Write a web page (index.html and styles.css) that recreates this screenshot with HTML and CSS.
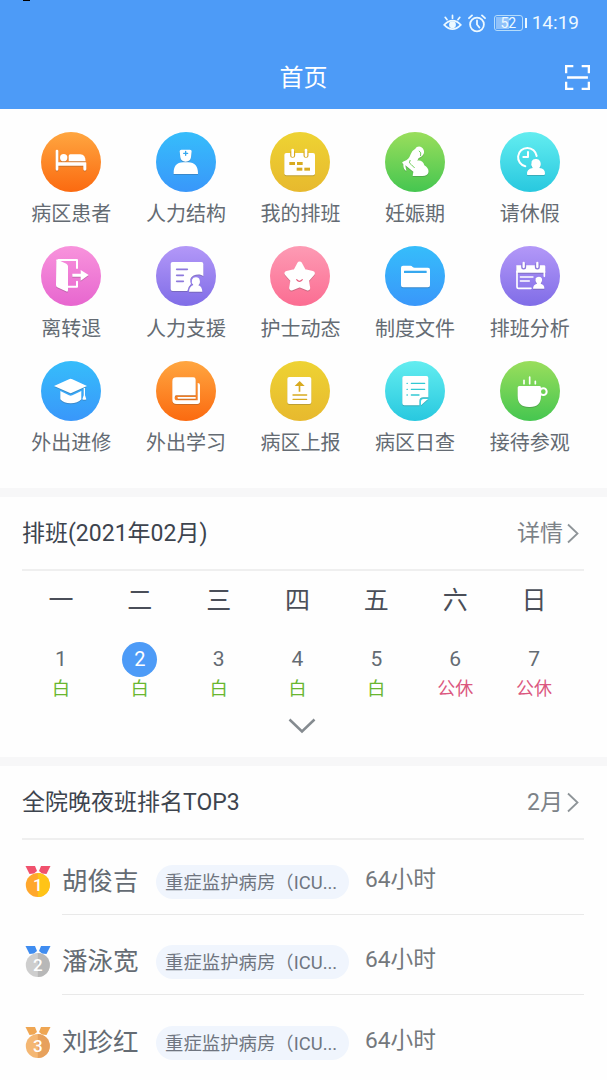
FILE: index.html
```html
<!DOCTYPE html>
<html lang="zh-CN">
<head>
<meta charset="utf-8">
<title>首页</title>
<link rel="stylesheet" href="styles.css">
</head>
<body>
<header class="header">
  <span class="notch"></span>
  <div class="status">
    <svg class="status-eye" viewBox="0 0 20 18" fill="none" stroke="currentColor" stroke-width="1.8" stroke-linecap="round"><path d="M1.3 11Q10 2.2 18.7 11Q10 20 1.3 11Z"/><circle cx="10" cy="10.8" r="2.7" fill="currentColor"/><path d="M10 4V1M4.3 5.5 2.3 3M15.7 5.5 17.7 3"/></svg>
    <svg class="status-clock" viewBox="0 0 18 19" fill="none" stroke="currentColor" stroke-width="1.8" stroke-linecap="round"><circle cx="9" cy="10.5" r="6.9"/><path d="M9 6.5V10.5L11.4 13.5M1 4.2 4 1.4M17 4.2 14 1.4"/></svg>
    <span class="battery"><span class="battery-level"></span><span class="battery-text">52</span></span>
    <span class="time">14:19</span>
  </div>
  <div class="titlebar">
    <h1 class="title">首页</h1>
    <svg class="scan" viewBox="0 0 24 24" fill="none" stroke="currentColor" stroke-width="2.2"><path d="M1.1 8V1.1H8M16 1.1H22.9V8M22.9 16V22.9H16M8 22.9H1.1V16M2 12H22"/></svg>
  </div>
</header>

<nav class="menu">
  <a class="item"><svg class="icon orange" viewBox="0 0 180 180"><g class="glyph"><path d="M44 57q0-4 4-4t4 4V91H134q2 0 2 3V112q0 4-4.500 4T127 112V101H52V112q0 4-4 4t-4-4Z"/><circle cx="68" cy="77" r="11"/><path d="M83 88V72q0-5 5-5H118q15 0 16 21Z"/></g></svg><span class="label">病区患者</span></a>
  <a class="item"><svg class="icon blue" viewBox="0 0 180 180"><g class="glyph"><path d="M71 58q0-5 5-5h26q5 0 5 5l-2 18q-2 13-16 13t-16-13ZM53 126q-2-34 29-35h14q31 1 30 35Z"/></g><path class="line" stroke-width="4" d="M89 58V70M83 64H95"/></svg><span class="label">人力结构</span></a>
  <a class="item"><svg class="icon yellow" viewBox="0 0 180 180"><g class="glyph"><rect x="43" y="63" width="92" height="67" rx="6"/></g><g class="cut"><rect x="58" y="90" width="17" height="9"/><rect x="81" y="90" width="17" height="9"/><rect x="80" y="107" width="17" height="9"/><rect x="103" y="107" width="17" height="9"/></g><path class="line" stroke-width="15" d="M68 62V70M108 62V70"/><path class="white-line" stroke-width="8" d="M68 54V71M108 54V71"/></svg><span class="label">我的排班</span></a>
  <a class="item"><svg class="icon green" viewBox="0 0 180 180"><g class="glyph"><path d="M91 50C96 40 112 41 116 54C120 64 113 72 107 75Q99 77 97 86C106 84 116 88 118 100C129 107 134 116 128 126C123 134 107 132 83 132L85 119L61 100L64 117Q54 111 55 96Q47 92 57 88Q72 83 77 67Q82 54 91 50Z"/></g><path class="line" stroke-width="3" d="M103 57Q110 61 107 71M75 85Q69 94 79 98L88 107"/></svg><span class="label">妊娠期</span></a>
  <a class="item"><svg class="icon cyan" viewBox="0 0 180 180"><g class="glyph"><path d="M81 128Q79 111 98 108Q91 98 95 88Q99 80 108 81Q118 80 121 89Q125 99 118 108Q136 110 135 125Q135 129 131 129H84Z"/></g><path class="white-line" stroke-width="6" d="M76 103A28 28 0 1 1 110 72M84 60V75H70"/></svg><span class="label">请休假</span></a>

  <a class="item"><svg class="icon pink" viewBox="0 0 180 180"><g class="glyph"><path d="M46 44Q44 39 50 41L76 53Q81 56 81 61V133Q81 139 75 136L49 124Q45 122 45 117Z"/><path d="M119 72 143 87 119 104V92H94V83H119Z"/></g><path class="white-line" stroke-width="6" d="M52 42H108V66M80 122H108V107"/></svg><span class="label">离转退</span></a>
  <a class="item"><svg class="icon violet" viewBox="0 0 180 180"><g class="glyph"><path d="M50 48H136Q142 48 142 54V91C134 82 109 84 103 99Q102 108 105 114Q98 120 94 135H50Q44 135 44 129V54Q44 48 50 48Z"/><path d="M99 137Q100 122 112 117Q105 110 108 101Q111 94 119 94Q129 93 131 102Q134 112 127 118Q138 121 139 137Z"/></g><path class="line" stroke-width="5" d="M62 70H94M62 88H82M62 106H82"/></svg><span class="label">人力支援</span></a>
  <a class="item"><svg class="icon rose" viewBox="0 0 180 180"><g class="glyph"><path class="star" d="M89 54 101 76 127 82 109 102 113 126 89 116 65 126 69 102 51 82 77 76Z"/></g><path class="line" stroke-width="3.500" d="M80 101Q88 111 97 101"/></svg><span class="label">护士动态</span></a>
  <a class="item"><svg class="icon blue" viewBox="0 0 180 180"><g class="glyph"><path d="M48 65Q48 59 54 59H76Q80 59 83 63Q85 65 89 65H129Q135 65 135 71V118Q135 124 129 124H54Q48 124 48 118Z"/></g><rect class="cut" x="57" y="74" width="68" height="7" rx="1"/></svg><span class="label">制度文件</span></a>
  <a class="item"><svg class="icon violet" viewBox="0 0 180 180"><path class="glyph" d="M49 58H132Q136 58 136 62V80H49Z"/><path class="white-line" stroke-width="5" d="M51 76V122Q51 127 56 127H93M133 76V91"/><path class="white-line" stroke-width="4" d="M61 93H99M61 105H88"/><path class="glyph" d="M99 128Q99 116 111 113Q104 105 107 97Q110 92 117 92Q124 92 126 98Q128 106 122 113Q134 116 133 128Z"/><path class="line" stroke-width="15" d="M71 57V63M112 57V63"/><path class="white-line" stroke-width="7" d="M71 51V63M112 51V63"/></svg><span class="label">排班分析</span></a>

  <a class="item"><svg class="icon blue" viewBox="0 0 180 180"><g class="glyph"><path d="M39 75 84 55Q89 52 94 55L138 75 91 96Q89 97 87 96Z"/><path d="M58 90 84 103Q89 105 94 103L121 90V115Q110 127 89 127T58 115Z"/><path d="M128 81H132V103L136 115Q130 118 124 115L128 103Z"/></g></svg><span class="label">外出进修</span></a>
  <a class="item"><svg class="icon orange" viewBox="0 0 180 180"><g class="glyph"><path d="M49 61Q49 49 61 49H112Q119 49 119 56V103H61Q56 103 56 110Q56 118 63 118H125V66Q132 66 132 72V121Q132 129 124 129H62Q49 129 49 117Z"/><path d="M66 108H119V113H66Q62 110 66 108Z"/></g></svg><span class="label">外出学习</span></a>
  <a class="item"><svg class="icon yellow" viewBox="0 0 180 180"><rect class="glyph" x="52" y="48" width="72" height="81" rx="6"/><path class="cut" d="M89 60 104 75H91V92H86V75H74Z"/><path class="line" stroke-width="4" d="M69 102H110M69 115H110"/></svg><span class="label">病区上报</span></a>
  <a class="item"><svg class="icon cyan" viewBox="0 0 180 180"><path class="glyph" d="M58 45H124Q130 45 130 51V109H115Q103 109 103 121V133H58Q52 133 52 127V51Q52 45 58 45ZM108 133V122Q108 114 116 114H129Z"/><path class="line" stroke-width="4" d="M66 67H67M79 67H119M66 85H67M79 85H119M66 102H67M79 102H102"/></svg><span class="label">病区日查</span></a>
  <a class="item"><svg class="icon green" viewBox="0 0 180 180"><path class="glyph" d="M53 80Q53 75 58 75H119Q123 75 123 80V105Q123 138 90 138H87Q53 138 53 105Z"/><circle class="white-line" cx="130" cy="92" r="10" stroke-width="6"/><path class="white-line" stroke-width="5" d="M72 58V68M89 48V68M106 61V68"/></svg><span class="label">接待参观</span></a>
</nav>

<section class="panel schedule">
  <div class="panel-head"><h2 class="panel-title">排班(2021年02月)</h2><a class="more">详情<svg class="arrow" viewBox="0 0 12 20"><path d="M1 1 10.500 10 1 19"/></svg></a></div>
  <div class="week">
    <span>一</span><span>二</span><span>三</span><span>四</span><span>五</span><span>六</span><span>日</span>
  </div>
  <div class="days">
    <div class="day"><b class="num">1</b><span class="work">白</span></div>
    <div class="day"><b class="num today">2</b><span class="work">白</span></div>
    <div class="day"><b class="num">3</b><span class="work">白</span></div>
    <div class="day"><b class="num">4</b><span class="work">白</span></div>
    <div class="day"><b class="num">5</b><span class="work">白</span></div>
    <div class="day"><b class="num">6</b><span class="rest">公休</span></div>
    <div class="day"><b class="num">7</b><span class="rest">公休</span></div>
  </div>
  <svg class="expand" viewBox="0 0 28 16"><path d="M1.500 1.500 14 13.500 26.500 1.500"/></svg>
</section>

<section class="panel ranking">
  <div class="panel-head"><h2 class="panel-title">全院晚夜班排名TOP3</h2><a class="more">2月<svg class="arrow" viewBox="0 0 12 20"><path d="M1 1 10.500 10 1 19"/></svg></a></div>
  <ol class="ranks">
    <li class="rank"><svg class="medal gold" viewBox="0 0 26 33"><path class="ribbon" d="M.5 1H10L12 6 9 8.500 4.500 9ZM25.500 1H16L14 6 17 8.500 21.500 9Z"/><circle class="coin" cx="12.800" cy="20" r="12"/><path class="shade" d="M12.800 8A12 12 0 0 1 12.800 32Z"/><text x="12.800" y="26">1</text></svg><div class="row"><span class="name">胡俊吉</span><span class="dept">重症监护病房（ICU...</span><span class="hours">64小时</span></div></li>
    <li class="rank"><svg class="medal silver" viewBox="0 0 26 33"><path class="ribbon" d="M.5 1H10L12 6 9 8.500 4.500 9ZM25.500 1H16L14 6 17 8.500 21.500 9Z"/><circle class="coin" cx="12.800" cy="20" r="12"/><path class="shade" d="M12.800 8A12 12 0 0 1 12.800 32Z"/><text x="12.800" y="26">2</text></svg><div class="row"><span class="name">潘泳宽</span><span class="dept">重症监护病房（ICU...</span><span class="hours">64小时</span></div></li>
    <li class="rank"><svg class="medal bronze" viewBox="0 0 26 33"><path class="ribbon" d="M.5 1H10L12 6 9 8.500 4.500 9ZM25.500 1H16L14 6 17 8.500 21.500 9Z"/><circle class="coin" cx="12.800" cy="20" r="12"/><path class="shade" d="M12.800 8A12 12 0 0 1 12.800 32Z"/><text x="12.800" y="26">3</text></svg><div class="row"><span class="name">刘珍红</span><span class="dept">重症监护病房（ICU...</span><span class="hours">64小时</span></div></li>
  </ol>
</section>
</body>
</html>
```
FILE: styles.css
```css
* { box-sizing: border-box; }
body {
  margin: 0;
  width: 607px;
  height: 1080px;
  overflow: hidden;
  background: #fefefe;
  color: #646b73;
  font-family: Roboto, "Noto Sans CJK SC", sans-serif;
  font-weight: 400;
}
h1, h2, ol { margin: 0; padding: 0; font-weight: 400; }
ol { list-style: none; }
svg { display: block; flex: none; }

.header { position: relative; height: 109px; background: #4d9bf7; color: #fff; }
.notch { position: absolute; left: 23px; top: 0; width: 7px; height: 1px; background: #000; }
.status { display: flex; align-items: center; height: 46px; padding: 0 28px 0 443px; color: #edf9ff; }
.status-eye { width: 19px; height: 18px; }
.status-clock { width: 18px; height: 19px; margin-left: 6px; }
.battery { position: relative; display: flex; align-items: center; justify-content: center; width: 29px; height: 16px; margin-left: 8px; border: 1px solid #b5dcfb; border-radius: 3px; }
.battery::after { content: ""; position: absolute; right: -5px; top: 2px; width: 2px; height: 10px; background: #edf9ff; }
.battery-level { position: absolute; left: 1px; top: 1px; width: 13px; height: 12px; background: #8fc1fa; }
.battery-text { position: relative; font-size: 14px; line-height: 14px; }
.time { margin-left: 9px; font-size: 19px; line-height: 24px; }
.titlebar { display: grid; grid-template-columns: 1fr auto 1fr; align-items: center; height: 62px; padding: 0 17px; }
.title { grid-column: 2; padding-top: 2px; font-size: 24px; line-height: 36px; }
.scan { justify-self: end; width: 25px; height: 25px; }

.menu { display: grid; grid-template-columns: repeat(5, 1fr); grid-auto-rows: 114.5px; width: 573px; height: 379px; margin-left: 14px; padding-top: 22.500px; }
.item { display: flex; flex-direction: column; align-items: center; }
.icon { width: 60px; height: 60px; border-radius: 50%; background: linear-gradient(var(--from), var(--to)); color: var(--cut); }
.orange { --from: #ffa640; --to: #fb6a10; --cut: #fb811f; }
.blue { --from: #36bdfb; --to: #3997fa; --cut: #37a8ef; }
.yellow { --from: #eed333; --to: #e7b92e; --cut: #d8aa20; }
.green { --from: #9ade5c; --to: #45c650; --cut: #6bce57; }
.cyan { --from: #63edf0; --to: #28c8df; --cut: #33c9d3; }
.pink { --from: #f893dc; --to: #e766cf; --cut: #ee7cd5; }
.violet { --from: #b398f8; --to: #806de7; --cut: #8d79dc; }
.rose { --from: #fd9bb4; --to: #fb6d92; --cut: #e85e80; }
.glyph { fill: #fff; filter: drop-shadow(0 3px 2px rgba(60, 60, 60, .25)); }
.cut { fill: var(--cut); }
.line, .white-line { fill: none; stroke: var(--cut); stroke-linecap: round; stroke-linejoin: round; }
.white-line { stroke: #fff; }
.star { stroke: #fff; stroke-width: 15; stroke-linejoin: round; }
.label { margin-top: 7.500px; font-size: 20px; line-height: 30px; white-space: nowrap; }

.panel { border-top: 9px solid #f7f7f8; }
.schedule { height: 269px; }
.panel-head { display: flex; align-items: center; justify-content: space-between; height: 74px; margin: 0 23px 0 22px; padding: 2px 5px 0 0; border-bottom: 2px solid #efefef; }
.panel-title { font-size: 23px; line-height: 34px; color: #3d444e; }
.more { display: flex; align-items: center; font-size: 23px; line-height: 34px; color: #7c8288; }
.arrow { width: 12px; height: 21px; margin: -2px 0 0 4px; }
.arrow path { fill: none; stroke: #8e9498; stroke-width: 1.800; }
.week, .days { display: grid; grid-template-columns: repeat(7, 1fr); width: 552px; margin-left: 21.500px; text-align: center; }
.week { padding-top: 12px; font-size: 25px; line-height: 36px; color: #4a4e58; }
.days { padding-top: 23px; }
.day { display: flex; flex-direction: column; align-items: center; }
.num { width: 35px; height: 35px; border-radius: 50%; font-size: 21px; line-height: 35px; font-weight: 400; }
.today { background: #4d9bf7; color: #fff; font-size: 20px; }
.work, .rest { font-size: 18px; line-height: 24px; }
.work { color: #69b62f; }
.rest { color: #db577f; }
.expand { width: 28px; height: 16px; margin: 17px auto 0 288px; }
.expand path { fill: none; stroke: #858b90; stroke-width: 2.500; }

.ranking { height: 323px; }
.rank { display: flex; align-items: flex-start; height: 80.300px; padding: 0 23px 0 25px; }
.medal { width: 26px; height: 33px; margin-top: 25px; }
.medal text { fill: #fff; font: 500 17px Roboto, sans-serif; text-anchor: middle; }
.gold { --ribbon: #f0516d; --coin: #ffa72c; --shade: #ffc417; }
.silver { --ribbon: #3f8cf0; --coin: #cecece; --shade: #b8b8b8; }
.bronze { --ribbon: #efa653; --coin: #f4b773; --shade: #e7a15c; }
.ribbon { fill: var(--ribbon); }
.coin { fill: var(--coin); }
.shade { fill: var(--shade); }
.row { display: flex; flex: 1; height: 75px; margin-left: 11px; border-bottom: 1px solid #e9e9e9; }
.rank:last-child .row { border-bottom: 0; }
.name { width: 94px; padding-top: 22px; font-size: 25.500px; line-height: 38px; }
.dept { width: 193px; height: 34px; margin-top: 25px; padding: 1px 0 0 9px; border-radius: 17px; background: #f0f5fd; font-size: 18.400px; line-height: 34px; color: #6f7580; white-space: nowrap; }
.hours { margin-left: 16px; padding-top: 23px; font-size: 22.700px; line-height: 34px; color: #74787c; }
```
